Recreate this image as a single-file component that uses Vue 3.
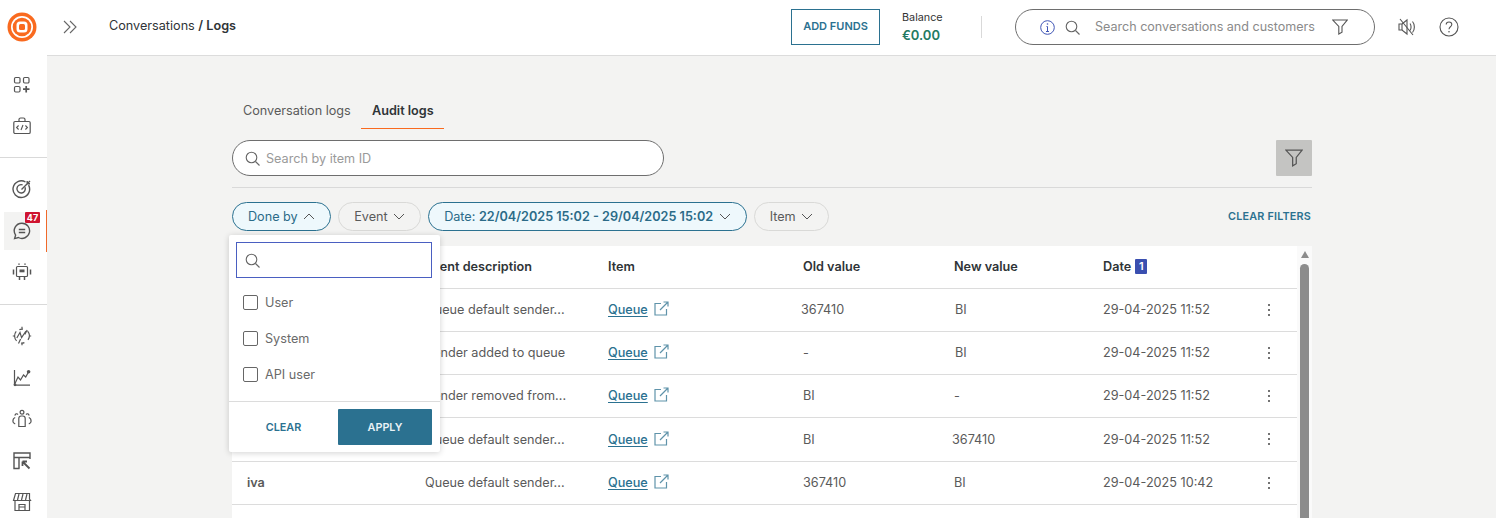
<script setup>
const rows = [
  { by: 'iva', desc: 'Queue default sender...', oldVal: '367410', oldX: -2, newVal: 'BI', newX: 1, date: '29-04-2025 11:52' },
  { by: 'iva', desc: 'Sender added to queue', oldVal: '-', oldX: 0, newVal: 'BI', newX: 1, date: '29-04-2025 11:52' },
  { by: 'iva', desc: 'Sender removed from...', oldVal: 'BI', oldX: 0, newVal: '-', newX: 0, date: '29-04-2025 11:52' },
  { by: 'iva', desc: 'Queue default sender...', oldVal: 'BI', oldX: 0, newVal: '367410', newX: -2, date: '29-04-2025 11:52' },
  { by: 'iva', desc: 'Queue default sender...', oldVal: '367410', oldX: 0, newVal: 'BI', newX: 0, date: '29-04-2025 10:42' },
]

const doneByOptions = ['User', 'System', 'API user']
</script>

<template>
  <div class="shell">
    <aside class="sidebar">
      <div class="logo">
        <svg width="30" height="30" viewBox="0 0 30 30">
          <circle cx="15" cy="15" r="14.5" fill="#f96a1f" />
          <circle cx="15" cy="15" r="11" fill="#fff" />
          <circle cx="15" cy="15" r="9.3" fill="#f96a1f" />
          <rect x="9.5" y="9.5" width="11" height="11" rx="3.5" fill="#fff" />
          <rect x="12" y="12" width="6" height="6" rx="1.5" fill="#f96a1f" />
        </svg>
      </div>

      <div class="side-group">
        <div class="side-slot">
          <svg width="18" height="18" viewBox="0 0 18 18" class="side-icon">
            <rect x="1.5" y="1.5" width="5.5" height="5.5" rx="1.2" />
            <rect x="10.5" y="1.5" width="5.5" height="5.5" rx="1.2" />
            <rect x="1.5" y="10.5" width="5.5" height="5.5" rx="1.2" />
            <path d="M13.2 10v6.5M10 13.2h6.5" stroke-width="1.7" />
          </svg>
        </div>
        <div class="side-slot">
          <svg width="18" height="18" viewBox="0 0 18 18" class="side-icon">
            <rect x="0.8" y="4.5" width="16.4" height="12" rx="1.3" />
            <path d="M6 4.5V2.6C6 1.6 6.8 1 7.6 1h2.8c.8 0 1.6.6 1.6 1.6v1.9" />
            <path d="M5.6 8.5 3.6 10.5l2 2M12.4 8.5l2 2-2 2M10 8l-2 5" stroke-width="1.1" />
          </svg>
        </div>
      </div>

      <div class="side-group side-group-mid">
        <div class="side-slot">
          <svg width="20" height="20" viewBox="0 0 20 20" class="side-icon">
            <path d="M16.6 6.2A8.3 8.3 0 1 1 13.5 3" stroke-width="1.4" />
            <path d="M13 8.2a4.2 4.2 0 1 1-2.4-2.3" stroke-width="1.4" />
            <path d="M9.5 10.4 18 2M15.2 2v2.8H18" stroke-width="1.4" />
          </svg>
        </div>
        <div class="side-slot">
          <div class="active-bg">
            <svg width="18" height="18" viewBox="0 0 18 18" class="side-icon">
              <path d="M9 1.2a7.6 7.6 0 1 1-3.6 14.3L1.6 16.6l1-3.5A7.6 7.6 0 0 1 9 1.2Z" stroke-width="1.4" />
              <path d="M5.8 7.4h6.4M5.8 10.6h6.4" stroke-width="1.5" />
            </svg>
          </div>
          <span class="side-badge">47</span>
          <span class="active-line"></span>
        </div>
        <div class="side-slot">
          <svg width="20" height="20" viewBox="0 0 20 20" class="side-icon">
            <rect x="4.5" y="4.5" width="11" height="10" rx="1" />
            <path d="M7 1.5v1.2M13 1.5v1.2M7.5 14.5V18M12.5 14.5V18M1.5 7.5v5M18.5 7.5v5" stroke-width="1.5" />
            <rect x="7.5" y="7.5" width="5" height="2.8" fill="#555" stroke="none" />
          </svg>
        </div>
      </div>

      <div class="side-group side-group-last">
        <div class="side-slot">
          <svg width="20" height="20" viewBox="0 0 20 20" class="side-icon">
            <path d="M15.6 5.2a7 7 0 0 1 .4 8.6M4.6 14.8a7 7 0 0 1-.4-9.4M7.4 3.6a7 7 0 0 1 3.6-.5M12.4 16.6a7 7 0 0 1-3.4.4" />
            <path d="M10 .8v2M10 17.2v2M.8 10h2M17.2 10h2" />
            <path d="M4.8 12 8 6.5l1.6 5.2L14 5M15.2 4l-2.4 4.4M6.5 17.5 8.6 13" />
          </svg>
        </div>
        <div class="side-slot">
          <svg width="18" height="18" viewBox="0 0 18 18" class="side-icon">
            <path d="M1.5 1v15.2M1.5 16.2H17" />
            <path d="M1.5 15.5 5 8l2.5 3 3-5 2.2 2L15.5 3" />
            <circle cx="2" cy="15.8" r="1.4" fill="#555" stroke="none" />
            <circle cx="15.6" cy="2.8" r="1.8" fill="#555" stroke="none" />
          </svg>
        </div>
        <div class="side-slot">
          <svg width="20" height="20" viewBox="0 0 20 20" class="side-icon">
            <circle cx="10" cy="3.2" r="1.9" />
            <path d="M6.8 17.5V9.6C6.8 8 7.8 7 9.2 7h1.6c1.4 0 2.4 1 2.4 2.6v7.9Z" />
            <path d="M3.1 6.6a1.5 1.5 0 0 1 2.8-1M16.9 6.6a1.5 1.5 0 0 0-2.8-1" />
            <path d="M3.2 8.5C1.8 9 .9 10.4 .9 12.2c0 1.2.7 2.2 2.3 2.7M16.8 8.5c1.4.5 2.3 1.9 2.3 3.7 0 1.2-.7 2.2-2.3 2.7" />
          </svg>
        </div>
        <div class="side-slot">
          <svg width="18" height="18" viewBox="0 0 18 18" class="side-icon">
            <path d="M6.5 16.5H1V1h16v6" stroke-width="1.4" />
            <path d="M1 5.5h16M6 5.5v11" stroke-width="1.4" />
            <path d="M9.5 9.5l7 7M9.5 9.5h4.5M9.5 9.5V14" stroke-width="1.8" />
          </svg>
        </div>
        <div class="side-slot">
          <svg width="20" height="20" viewBox="0 0 20 20" class="side-icon">
            <path d="M3.5 1.5h14v5.5l1 1.5H1.5l2-7Z" />
            <path d="M7 2 5.5 8M11 2 9.5 8M15 2l-1.5 6" />
            <path d="M3 8.5v10h14.5v-10" />
            <path d="M7 18.5v-6h6v6M7 15h6" />
          </svg>
        </div>
      </div>
    </aside>

    <div class="page">
      <header class="topbar">
        <svg class="expand" width="14" height="14" viewBox="0 0 14 14">
          <path d="M1 1l6 6-6 6M7 1l6 6-6 6" />
        </svg>
        <div class="crumbs">Conversations <b>/ Logs</b></div>
        <button class="add-funds">ADD FUNDS</button>
        <div class="balance">
          <span class="balance-label">Balance</span>
          <span class="balance-value">€0.00</span>
        </div>
        <div class="top-sep"></div>
        <div class="top-search">
          <svg width="15" height="15" viewBox="0 0 15 15" class="info-icon">
            <circle cx="7.5" cy="7.5" r="6.8" />
            <path d="M7.5 6.5v5M6 11.5h3M6.5 6.5h1" />
            <circle cx="7.5" cy="4" r=".8" fill="#3f55b5" stroke="none" />
          </svg>
          <svg width="15" height="15" viewBox="0 0 15 15" class="search-icon top-search-icon">
            <circle cx="6.5" cy="6.5" r="5.3" />
            <path d="M10.5 10.5l4 4" />
          </svg>
          <span class="top-search-text">Search conversations and customers</span>
          <svg width="16" height="16" viewBox="0 0 16 16" class="funnel top-funnel">
            <path d="M.8 1h14.4L10 7.5v5.6L6.8 15V7.5Z" />
          </svg>
        </div>
        <svg width="20" height="20" viewBox="0 0 20 20" class="top-icon mute">
          <path d="M2 7v6h3l5 4V3L5 7H2Z" />
          <path d="M5 7v6M13 6.5c1.4 1.8 1.4 5.2 0 7M15.5 4.5c2.5 3 2.5 8 0 11M3 2l13 16" />
        </svg>
        <svg width="20" height="20" viewBox="0 0 20 20" class="top-icon help">
          <circle cx="10" cy="10" r="9" />
          <path d="M7.2 7.6C7.2 5.8 8.5 5 10 5s2.8 1 2.8 2.5c0 2.3-2.8 2.3-2.8 4.7" />
          <circle cx="10" cy="14.8" r=".8" fill="#555" stroke="none" />
        </svg>
      </header>

      <main class="content">
        <nav class="tabs">
          <span class="tab tab-first">Conversation logs</span>
          <span class="tab tab-active">Audit logs</span>
        </nav>

        <div class="search-row">
          <div class="search-box">
            <svg width="15" height="15" viewBox="0 0 15 15" class="search-icon">
              <circle cx="6.5" cy="6.5" r="5.3" />
              <path d="M10.5 10.5l4 4" />
            </svg>
            <span class="placeholder">Search by item ID</span>
          </div>
          <button class="filter-btn">
            <svg width="18" height="18" viewBox="0 0 16 16" class="funnel">
              <path d="M.8 1h14.4L10 7.5v5.6L6.8 15V7.5Z" />
            </svg>
          </button>
        </div>

        <div class="chips">
          <button class="chip chip-on">
            Done by
            <svg width="12" height="7" viewBox="0 0 12 7" class="chev"><path d="M1 6l5-5 5 5" /></svg>
          </button>
          <button class="chip">
            Event
            <svg width="12" height="7" viewBox="0 0 12 7" class="chev"><path d="M1 1l5 5 5-5" /></svg>
          </button>
          <button class="chip chip-on">
            <span>Date: <b class="chip-value">22/04/2025 15:02 - 29/04/2025 15:02</b></span>
            <svg width="12" height="7" viewBox="0 0 12 7" class="chev"><path d="M1 1l5 5 5-5" /></svg>
          </button>
          <button class="chip">
            Item
            <svg width="12" height="7" viewBox="0 0 12 7" class="chev"><path d="M1 1l5 5 5-5" /></svg>
          </button>
          <span class="clear-filters">CLEAR FILTERS</span>

          <div class="dropdown">
            <div class="dd-search">
              <svg width="15" height="15" viewBox="0 0 15 15" class="search-icon">
                <circle cx="6.5" cy="6.5" r="5.3" />
                <path d="M10.5 10.5l4 4" />
              </svg>
            </div>
            <label v-for="opt in doneByOptions" :key="opt" class="dd-option">
              <span class="checkbox"></span>
              {{ opt }}
            </label>
            <div class="dd-footer">
              <span class="dd-clear">CLEAR</span>
              <button class="dd-apply">APPLY</button>
            </div>
          </div>
        </div>

        <div class="table-wrap">
          <table class="logs">
            <colgroup>
              <col class="c-by" />
              <col class="c-desc" />
              <col class="c-item" />
              <col class="c-old" />
              <col class="c-new" />
              <col class="c-date" />
              <col />
            </colgroup>
            <thead>
              <tr>
                <th class="first">Done by</th>
                <th>Event description</th>
                <th>Item</th>
                <th>Old value</th>
                <th>New value</th>
                <th>Date <span class="sort-badge">1</span></th>
                <th></th>
              </tr>
            </thead>
            <tbody>
              <tr v-for="(row, i) in rows" :key="i">
                <td class="first by">{{ row.by }}</td>
                <td>{{ row.desc }}</td>
                <td>
                  <span class="item-link">
                    <a class="queue">Queue</a>
                    <svg width="15" height="15" viewBox="0 0 15 15" class="ext">
                      <path d="M7 2.5H1V14h11.5V8" />
                      <path d="M6 9l8-8M9.5 1H14v4.5" />
                    </svg>
                  </span>
                </td>
                <td><span :style="{ marginLeft: row.oldX + 'px' }" class="val">{{ row.oldVal }}</span></td>
                <td><span :style="{ marginLeft: row.newX + 'px' }" class="val">{{ row.newVal }}</span></td>
                <td>{{ row.date }}</td>
                <td>
                  <span class="kebab"><i></i><i></i><i></i></span>
                </td>
              </tr>
            </tbody>
          </table>
          <div class="scrollbar">
            <span class="scroll-arrow"></span>
            <span class="scroll-thumb"></span>
          </div>
        </div>
      </main>
    </div>
  </div>
</template>

<style>
html,
body {
  margin: 0;
  height: 100%;
  overflow: hidden;
}
</style>

<style scoped>
.shell {
  display: flex;
  height: 518px;
  overflow: hidden;
  font-family: Inter, "Liberation Sans", sans-serif;
  font-size: 12.65px;
  color: #5a5a5a;
  background: #fff;
}

svg {
  fill: none;
  display: block;
  flex-shrink: 0;
}

/* sidebar */
.sidebar {
  width: 47px;
  flex-shrink: 0;
  background: #fff;
}

.logo {
  height: 54px;
  display: flex;
  align-items: center;
  justify-content: center;
  padding-right: 3px;
  box-sizing: border-box;
}

.side-group {
  padding: 10px 0;
  border-bottom: 1px solid #d9d9d9;
}

.side-group-mid {
  padding-bottom: 11.5px;
}

.side-group-last {
  padding-top: 10.5px;
  border-bottom: none;
}

.side-slot {
  position: relative;
  height: 41.5px;
  display: flex;
  align-items: center;
  justify-content: center;
  padding-right: 3px;
  box-sizing: border-box;
}

.side-icon {
  stroke: #555;
  stroke-width: 1.2;
}

.active-bg {
  width: 36px;
  height: 38px;
  margin-top: 1px;
  background: #f3f3f2;
  display: flex;
  align-items: center;
  justify-content: center;
}

.side-badge {
  position: absolute;
  left: 25px;
  top: 2.5px;
  width: 15px;
  height: 11px;
  background: #cf1430;
  border-radius: 1px;
  color: #fff;
  font-size: 9px;
  font-weight: 700;
  line-height: 11px;
  text-align: center;
}

.active-line {
  position: absolute;
  right: 0;
  top: 0;
  width: 1px;
  height: 42px;
  background: #f0692a;
}

/* top bar */
.page {
  flex: 1;
  min-width: 0;
  display: flex;
  flex-direction: column;
}

.topbar {
  height: 56px;
  box-sizing: border-box;
  flex-shrink: 0;
  display: flex;
  align-items: center;
  padding: 0 37px 1px 16px;
  background: #fff;
  border-bottom: 1px solid #dcdcdc;
}

.expand {
  stroke: #666;
  stroke-width: 1.1;
}

.crumbs {
  margin-left: 32px;
  padding-bottom: 3px;
  color: #2f3437;
}

.crumbs b {
  font-weight: 600;
}

.add-funds {
  margin-left: auto;
  width: 89px;
  height: 36px;
  padding: 0 0 2px;
  background: #fff;
  border: 1px solid #2b7190;
  color: #2b7190;
  font: 600 11px Inter, "Liberation Sans", sans-serif;
}

.balance {
  margin-left: 22px;
  width: 79px;
  display: flex;
  flex-direction: column;
  gap: 2px;
}

.balance-label {
  font-size: 10.8px;
  color: #333;
  line-height: 14px;
}

.balance-value {
  font-size: 13px;
  line-height: 16px;
  font-weight: 600;
  color: #237a62;
}

.top-sep {
  width: 1px;
  height: 22px;
  background: #d9d9d9;
}

.top-search {
  margin-left: 33px;
  width: 360px;
  height: 36px;
  box-sizing: border-box;
  border: 1px solid #6e6e6e;
  border-radius: 18px;
  display: flex;
  align-items: center;
  padding-left: 24px;
  background: #fff;
}

.info-icon {
  stroke: #3f55b5;
  stroke-width: 1;
}

.search-icon {
  stroke: #666;
  stroke-width: 1.1;
}

.top-search-icon {
  margin-left: 10px;
}

.top-search-text {
  margin-left: 15px;
  padding-bottom: 2px;
  width: 229px;
  flex-shrink: 0;
  color: #8a8a8a;
  font-size: 12.55px;
  white-space: nowrap;
}

.funnel {
  stroke: #555;
  stroke-width: 1.1;
}

.top-funnel {
  margin-left: 8px;
}

.top-icon {
  stroke: #555;
  stroke-width: 1.1;
}

.mute {
  margin-left: 22px;
}

.help {
  margin-left: 22px;
}

/* content */
.content {
  flex: 1;
  min-height: 0;
  overflow: hidden;
  background: #f3f3f2;
  padding: 36px 184px 0 185px;
}

.tabs {
  display: flex;
  height: 38px;
}

.tab {
  padding: 0 0 0 11px;
  line-height: 37px;
  color: #5a5a5a;
  height: 37px;
  box-sizing: border-box;
}

.tab-first {
  width: 129px;
}

.tab-active {
  width: 83px;
  color: #2f3437;
  font-weight: 600;
  border-bottom: 1px solid #f96a1f;
}

.search-row {
  margin-top: 10px;
  display: flex;
  justify-content: space-between;
  padding-bottom: 11px;
  border-bottom: 1px solid #d9d9d9;
}

.search-box {
  width: 432px;
  height: 36px;
  box-sizing: border-box;
  border: 1px solid #6e6e6e;
  border-radius: 18px;
  background: #fff;
  display: flex;
  align-items: center;
  gap: 6px;
  padding-left: 12px;
}

.placeholder {
  color: #9a9a9a;
}

.filter-btn {
  width: 36px;
  height: 36px;
  padding: 0;
  border: none;
  border-radius: 1px;
  background: #c4c4c2;
  display: flex;
  align-items: center;
  justify-content: center;
}

.chips {
  position: relative;
  margin-top: 14px;
  display: flex;
  align-items: center;
  gap: 7px;
}

.chip {
  height: 29px;
  box-sizing: border-box;
  padding: 0 15px;
  border: 1px solid #d9d9d7;
  border-radius: 15px;
  background: #f3f3f2;
  color: #5a5a5a;
  font: 400 12.65px Inter, "Liberation Sans", sans-serif;
  display: flex;
  align-items: center;
  gap: 5.5px;
  white-space: nowrap;
}

.chip-on {
  border-color: #2b7190;
  background: #eef8fc;
  color: #2b6b88;
}

.chip-value {
  font-weight: 600;
}

.chev {
  stroke: #555;
  stroke-width: 1;
}

.clear-filters {
  margin-left: auto;
  font-size: 10.8px;
  font-weight: 600;
  color: #2b7190;
  letter-spacing: 0.2px;
  padding-right: 1px;
}

.dropdown {
  position: absolute;
  z-index: 5;
  left: -3px;
  top: 33px;
  width: 211px;
  height: 217px;
  box-sizing: border-box;
  background: #fff;
  border-radius: 2px;
  box-shadow: 0 1px 6px rgba(0, 0, 0, 0.18);
  padding-top: 7px;
}

.dd-search {
  margin: 0 8px 6px 7px;
  height: 36px;
  box-sizing: border-box;
  border: 1px solid #4a5fc1;
  display: flex;
  align-items: center;
  padding-left: 8px;
}

.dd-option {
  height: 36px;
  display: flex;
  align-items: center;
  gap: 7px;
  padding-left: 14px;
  color: #6a6a6a;
}

.checkbox {
  width: 13px;
  height: 13px;
  border: 1px solid #666;
  border-radius: 2px;
  background: #fff;
}

.dd-footer {
  margin-top: 9px;
  border-top: 1px solid #dcdcdc;
  padding: 7px 8px 0 0;
  display: flex;
  align-items: center;
  justify-content: space-between;
}

.dd-clear {
  width: 109px;
  text-align: center;
  font-size: 10.8px;
  font-weight: 600;
  color: #2b7190;
}

.dd-apply {
  width: 94px;
  height: 36px;
  padding: 0;
  border: none;
  border-radius: 1px;
  background: #2b7190;
  color: #e9f2f6;
  font: 600 10.8px Inter, "Liberation Sans", sans-serif;
}

/* table */
.table-wrap {
  margin-top: 15px;
  display: flex;
  background: #fff;
  height: 272px;
  overflow: hidden;
}

.logs {
  width: 1065px;
  flex-shrink: 0;
  table-layout: fixed;
  border-collapse: collapse;
  align-self: flex-start;
}

.c-by {
  width: 193px;
}

.c-desc {
  width: 183px;
}

.c-item {
  width: 195px;
}

.c-old {
  width: 151px;
}

.c-new {
  width: 149px;
}

.c-date {
  width: 155px;
}

.logs th,
.logs td {
  height: 43px;
  padding: 0;
  text-align: left;
  border-bottom: 1px solid #dcdcdc;
  box-sizing: border-box;
  white-space: nowrap;
}

.logs th {
  height: 42px;
  color: #2f3437;
  font-weight: 600;
}

.logs tr:nth-child(4) td {
  height: 44px;
}

.logs .first {
  padding-left: 15px;
}

.by {
  font-weight: 600;
}

.sort-badge {
  display: inline-block;
  width: 12px;
  height: 15px;
  margin-left: 1px;
  border-radius: 1px;
  background: #3a4fb0;
  color: #fff;
  font-size: 11px;
  font-weight: 600;
  line-height: 14px;
  text-align: center;
  vertical-align: 1px;
}

.item-link {
  display: flex;
  align-items: center;
  gap: 6px;
}

.queue {
  color: #2b7190;
  font-weight: 500;
  text-decoration: underline;
  text-underline-offset: 2px;
}

.ext {
  stroke: #5f93aa;
  stroke-width: 1.2;
  margin-top: -2px;
}

.val {
  display: inline-block;
}

.kebab {
  display: flex;
  flex-direction: column;
  align-items: center;
  gap: 3px;
  width: 21px;
}

.kebab i {
  width: 2px;
  height: 2px;
  border-radius: 50%;
  background: #444;
}

.scrollbar {
  flex: 1;
  background: #fafafa;
  display: flex;
  flex-direction: column;
  align-items: center;
  padding-top: 5px;
}

.scroll-arrow {
  width: 0;
  height: 0;
  border-left: 4.5px solid transparent;
  border-right: 4.5px solid transparent;
  border-bottom: 7px solid #8c8c8c;
}

.scroll-thumb {
  margin-top: 6px;
  flex: 1;
  width: 9px;
  border-radius: 4.5px 4.5px 0 0;
  background: #8c8c8c;
}
</style>
